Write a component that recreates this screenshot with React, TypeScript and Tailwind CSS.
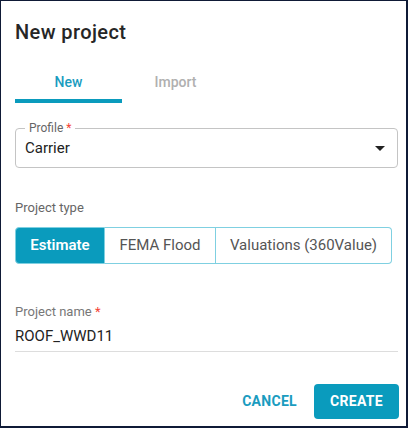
import { useState } from 'react'

const TYPES = ['Estimate', 'FEMA Flood', 'Valuations (360Value)']

export default function App() {
  const [tab, setTab] = useState('new')
  const [projectType, setProjectType] = useState('Estimate')

  return (
    <div
      className="w-[408px] h-[428px] bg-[#0f1a36] pt-px pl-px pr-[2px] pb-[2px]"
      style={{ fontFamily: 'Roboto, "Liberation Sans", sans-serif' }}
    >
      <div className="h-full bg-white flex flex-col pl-[14px] pr-[8px]">
        {/* Title */}
        <h2 className="mt-[17px] text-[20px] leading-7 font-medium tracking-[0.4px] text-[#262626]">New project</h2>

        {/* Tabs */}
        <div className="mt-[26px] flex">
          {[
            { id: 'new', label: 'New' },
            { id: 'import', label: 'Import' },
          ].map((t) => (
            <button
              key={t.id}
              onClick={() => setTab(t.id)}
              className={`w-[107px] pb-[7px] border-b-4 text-[14px] leading-5 font-medium ${
                tab === t.id ? 'border-[#0a9bbd] text-[#1a9cbf]' : 'border-transparent text-[#b0b0b0]'
              }`}
            >
              {t.label}
            </button>
          ))}
        </div>

        {/* Profile select */}
        <div className="relative mt-[25px] h-[40px] border border-[#c4c4c4] rounded-[4px] pl-[9px] pr-[12px] flex items-center">
          <span className="absolute left-[9px] -top-[8px] bg-white px-[4px] text-[12px] leading-[14px] text-[#666]">
            Profile <span className="text-[#f44336]">*</span>
          </span>
          <span className="flex-1 text-[15px] text-[#222]">Carrier</span>
          <svg width="10" height="5" viewBox="0 0 10 5">
            <path d="M0 0h10L5 5z" fill="#222" />
          </svg>
        </div>

        {/* Project type */}
        <div className="mt-[32px] text-[13px] leading-4 text-[#666]">Project type</div>
        <div className="mt-[11px] flex w-[377px] h-[37px]">
          {TYPES.map((t, i) => (
            <button
              key={t}
              onClick={() => setProjectType(t)}
              className={`h-full text-[15px] border-[#7fd0e1] ${
                i === 0 ? 'w-[90px] rounded-l-[4px] border' : i === 1 ? 'w-[111px] border-y border-r' : 'flex-1 rounded-r-[4px] border-y border-r'
              } ${
                projectType === t ? 'bg-[#0a9bbd] border-[#0a9bbd] text-white font-semibold' : 'bg-white text-[#555]'
              }`}
            >
              {t}
            </button>
          ))}
        </div>

        {/* Project name */}
        <div className="mt-[40px] text-[13px] leading-4 text-[#777]">
          Project name <span className="text-[#f44336]">*</span>
        </div>
        <div className="mt-[6px] pb-[5px] border-b border-[#dddddd] text-[15px] leading-5 text-[#222]">ROOF_WWD11</div>

        {/* Actions */}
        <div className="mt-[32px] flex justify-end items-center gap-[17px] -mr-px">
          <button className="text-[14px] font-bold text-[#1a9cbf] tracking-[0.3px]">CANCEL</button>
          <button className="w-[85px] h-[35px] rounded-[4px] bg-[#0a9bbd] text-white text-[14px] font-bold tracking-[0.3px]">
            CREATE
          </button>
        </div>
      </div>
    </div>
  )
}
